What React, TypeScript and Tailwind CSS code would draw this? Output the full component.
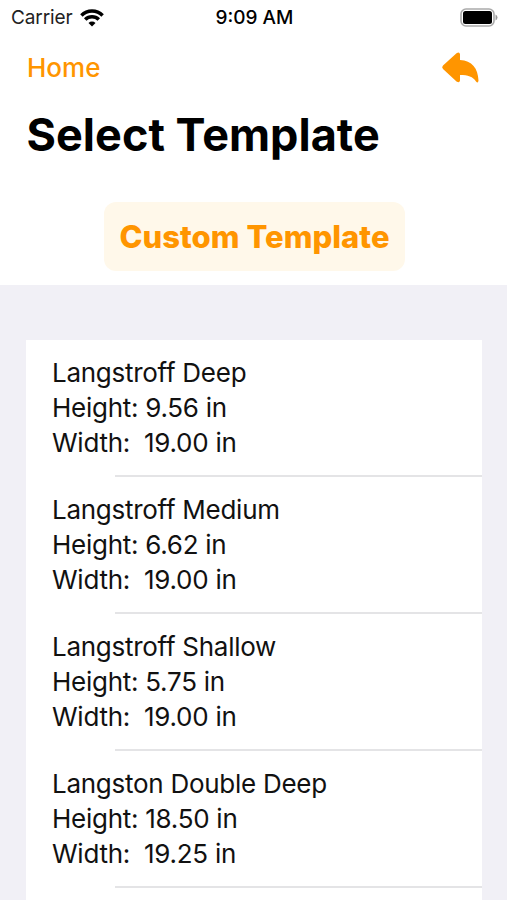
const templates = [
  { name: 'Langstroff Deep', height: '9.56', width: '19.00' },
  { name: 'Langstroff Medium', height: '6.62', width: '19.00' },
  { name: 'Langstroff Shallow', height: '5.75', width: '19.00' },
  { name: 'Langston Double Deep', height: '18.50', width: '19.25' },
];

function StatusBar() {
  return (
    <header className="grid h-[35px] grid-cols-3 items-center pl-[11px] pr-[9px] text-[19px]">
      <div className="flex items-center gap-[7px]">
        <span className="pt-0.5 tracking-[-0.1px] text-[#222]">Carrier</span>
        <svg width="24" height="18" viewBox="0 0 24 18" fill="none" stroke="black" strokeWidth="3.5">
          <path d="M1.400 6.400a15 15 0 0 1 21.200 0M5.200 10.600a9.700 9.700 0 0 1 13.600 0" />
          <path d="M8.500 14a5 5 0 0 1 7 0L12 17.500Z" fill="black" stroke="none" />
        </svg>
      </div>
      <span className="pt-0.5 text-center font-medium">9:09 AM</span>
      <svg className="justify-self-end" width="38" height="20" viewBox="0 0 38 20">
        <rect x="1" y="1" width="33" height="17" rx="5" fill="none" stroke="#aaa" strokeWidth="1.600" />
        <rect x="3" y="3" width="29" height="13" rx="2.500" />
        <path d="M35.500 6.500q2 1 2 3t-2 3Z" fill="#999" />
      </svg>
    </header>
  );
}

export default function App() {
  return (
    <main className="flex h-[900px] w-[507px] flex-col overflow-hidden bg-[#f1f0f6] font-[Inter,sans-serif] text-black">
      <section className="h-[285px] shrink-0 bg-white">
        <StatusBar />
        <nav className="flex h-16 items-center justify-between pl-[27px] pr-7 text-[#ff9500]">
          <a className="text-[26px] font-medium">Home</a>
          <svg className="mt-px" width="38" height="34" viewBox="0 0 38 34" fill="currentColor">
            <path d="M2 14.500 15.500 2.300Q18.500 .3 19 3.300V9C31 9.500 37 17.500 37.500 29.500q-.5 3.500-2.500 1C32 25.500 27 24 19 24v5.500q-.5 3-3.500 1L2 18q-1.700-1.800 0-3.500Z" />
          </svg>
        </nav>
        <h1 className="ml-[26.500px] mt-2 text-[45px] font-bold leading-[56px] tracking-[0.03px]">Select Template</h1>
        <button className="ml-[104px] mt-[39px] flex h-[69px] w-[301px] items-center justify-center rounded-xl bg-[#fff8ea] pt-px text-[31px] font-extrabold tracking-[0.03px] text-[#ff9500]">Custom Template</button>
      </section>
      <ul className="ml-[26px] mr-[25px] mt-[55px] bg-white">
        {templates.map((t) => (
          <li key={t.name} className="h-[137px] pl-[26px] pt-[15px] text-[26px] leading-[35px] tracking-[-0.27px] text-[#111]">
            <p>{t.name}</p>
            <p>Height: {t.height} in</p>
            <p className="whitespace-pre">Width:  {t.width} in</p>
            <hr className="ml-[63px] mt-[15px] border-t-2 border-[#e4e4e6]" />
          </li>
        ))}
        <li className="h-4" />
      </ul>
    </main>
  );
}
